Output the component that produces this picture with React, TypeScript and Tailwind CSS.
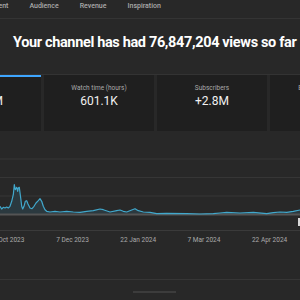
const tabs = ['Engagement', 'Audience', 'Revenue', 'Inspiration'];

const cards = [
  { label: 'Views', value: '76.8M' },
  { label: 'Watch time (hours)', value: '601.1K' },
  { label: 'Subscribers', value: '+2.8M' },
  { label: 'Estimated revenue', value: '$—' },
];

const dates = ['22 Oct 2023', '7 Dec 2023', '22 Jan 2024', '7 Mar 2024', '22 Apr 2024'];

const pts: [number, number][] = [
  [0, 68.3], [1.7, 71], [3.3, 69.3], [5, 70], [6.7, 69], [8.3, 70], [10, 68.3],
  [11.7, 63.3], [13.3, 56.7], [14.3, 46.7], [15.3, 51.7], [16.7, 49.3], [17.7, 53.3],
  [18.3, 50], [19.3, 49.3], [20.7, 60], [21.7, 68.3], [22.7, 71], [24, 68.3],
  [25.3, 63.3], [26.7, 62.7], [28, 66], [30, 70], [32, 70.7], [34, 68.3], [36, 65],
  [38.3, 62.7], [40, 60.7], [41.7, 63.3], [43.3, 68.3], [45, 71.7], [46.7, 73.3],
  [50, 74], [55, 73.3], [60, 74], [66.7, 73.3], [73.3, 74], [80, 74.3], [86.7, 73.3],
  [93.3, 72.7], [100, 71], [103.3, 71.7], [110, 74], [116.7, 72.7], [120, 72],
  [123.3, 73.3], [126.7, 74], [131.7, 72], [135, 70.7], [138.3, 72.7], [143.3, 74],
  [150, 74.3], [156.7, 75.7], [166.7, 75.3], [186.7, 75.7], [200, 76], [213.3, 75.7],
  [220, 75], [226.7, 74.3], [240, 75], [253.3, 74.3], [266.7, 75.7], [273.3, 74.7],
  [280, 74], [286.7, 74.3], [293.3, 73.3], [300, 72],
];

function Chart() {
  const line = pts.map(([x, y], i) => `${i ? 'L' : 'M'}${x} ${y}`).join(' ');
  const area = `${line} L300 76 L0 76 Z`;
  return (
    <svg width="300" height="78" viewBox="0 0 300 78" className="block">
      <line x1="0" y1="21" x2="300" y2="21" stroke="#363636" strokeWidth="1" />
      <line x1="0" y1="39.5" x2="300" y2="39.5" stroke="#363636" strokeWidth="1" />
      <line x1="0" y1="58" x2="300" y2="58" stroke="#363636" strokeWidth="1" />
      <path d={area} fill="#2c3d45" opacity="0.8" />
      <line x1="0" y1="76.5" x2="300" y2="76.5" stroke="#545454" strokeWidth="2" />
      <path d={line} fill="none" stroke="#41a8cc" strokeWidth="1.2" strokeLinejoin="round" />
    </svg>
  );
}

export default function App() {
  return (
    <div className="w-[300px] h-[300px] overflow-hidden bg-[#282828] font-['Roboto',sans-serif]">
      <div className="h-[19px] border-b border-[#343434] flex gap-[21px] -ml-[31px] pt-[2px]">
        {tabs.map((t) => (
          <span key={t} className="text-[7px] leading-[8px] font-medium text-[#aaaaaa]">
            {t}
          </span>
        ))}
      </div>

      <h1 className="mt-[15px] ml-[13px] text-[14.5px] leading-[18px] font-bold tracking-[-0.35px] text-white whitespace-nowrap">
        Your channel has had 76,847,204 views so far
      </h1>

      <div className="mt-[22px] border-t border-[#333333] flex gap-[3px] -ml-[69px]">
        {cards.map((c, i) => (
          <div
            key={c.label}
            className="relative w-[110px] h-[56px] shrink-0 bg-[#1f1f1f] flex flex-col items-center pt-[9px]"
          >
            {i === 0 && <div className="absolute top-0 left-0 right-0 h-[2px] bg-[#3ea6ff]" />}
            <span className="text-[6.5px] leading-[8px] text-[#aaaaaa] whitespace-nowrap">{c.label}</span>
            <span className="mt-[2px] text-[12px] leading-[14px] text-[#f1f1f1] whitespace-nowrap">{c.value}</span>
          </div>
        ))}
      </div>

      <div className="relative mt-[7px]">
        <Chart />
        <div className="absolute right-0 top-[80px] w-[2px] h-[8px] bg-[#d8d8d8]" />
      </div>

      <div className="mt-[14px] border-t border-[#3a3a3a] flex -ml-[26px]">
        {dates.map((d) => (
          <span
            key={d}
            className="w-[65.7px] shrink-0 text-center text-[6.5px] leading-[10px] pt-[4px] text-[#aaaaaa] whitespace-nowrap"
          >
            {d}
          </span>
        ))}
      </div>

      <div className="mt-[34px] border-t border-[#363636] pt-[11px]">
        <div className="ml-[133px] w-[43px] h-[2px] bg-[#3c3c3c]" />
      </div>
    </div>
  );
}
